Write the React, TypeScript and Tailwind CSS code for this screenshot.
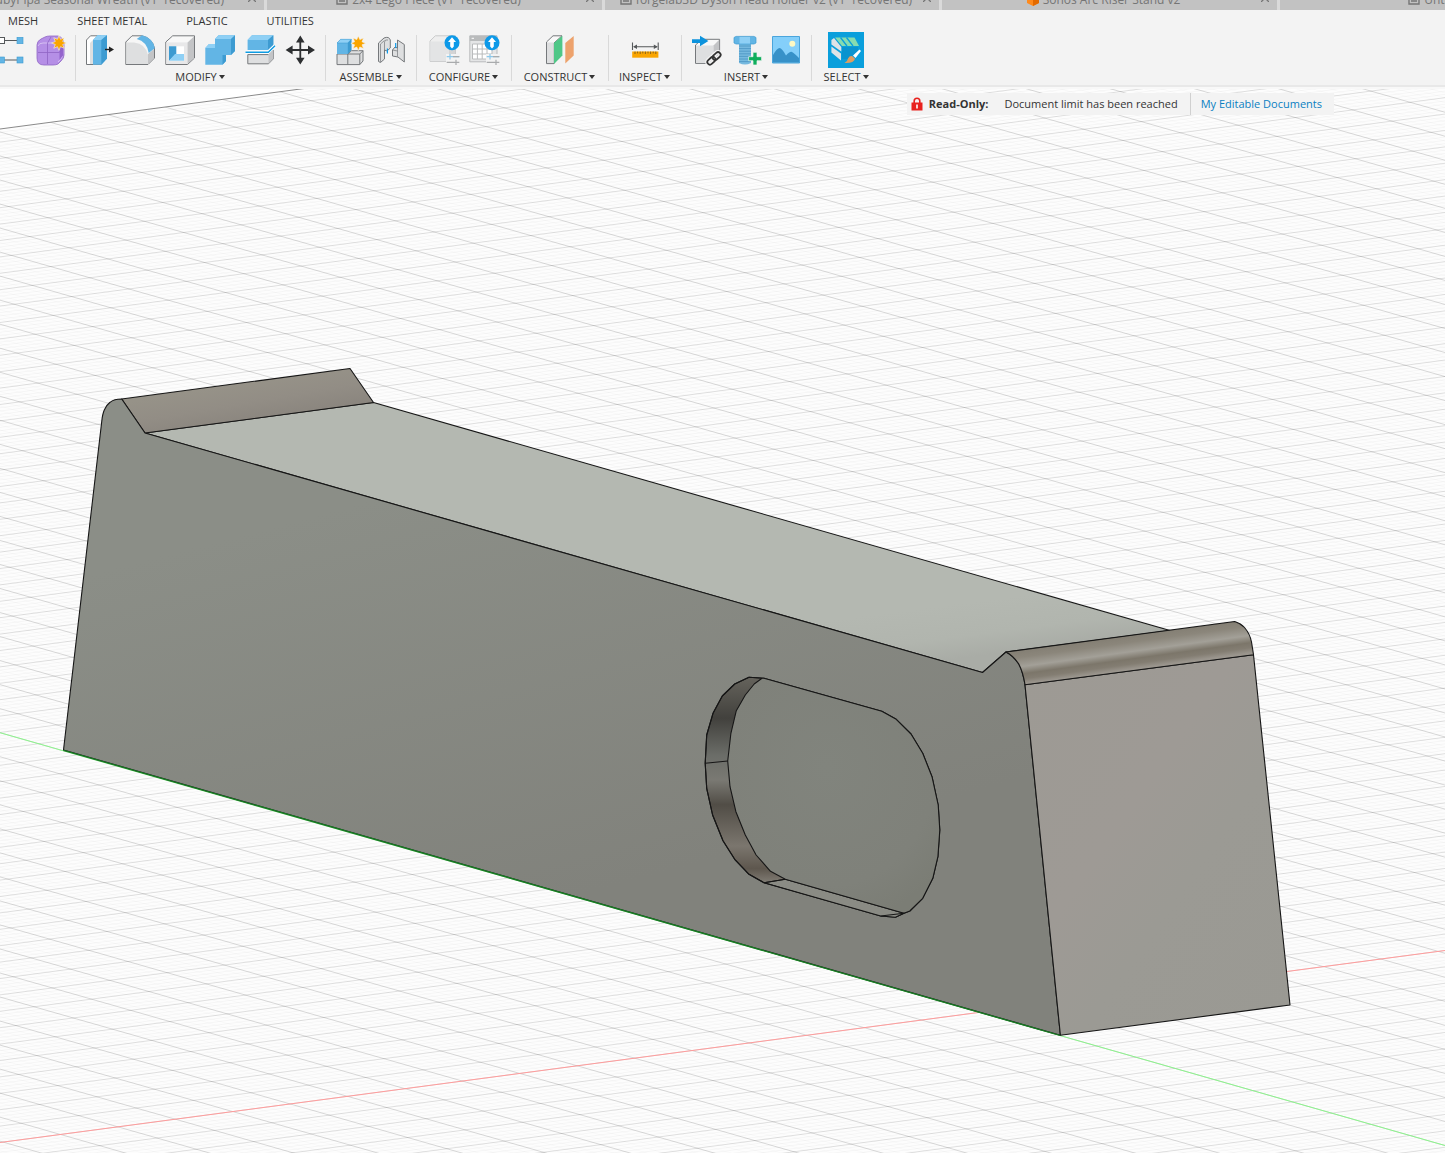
import type { ReactNode } from "react"

const BLUE = "#62b5e5"
const BLUE_DARK = "#3d9bd1"
const EDGE = "#75787b"
const FACE = "#dedfe0"
const SIDE = "#c3c4c6"

function Icon({ children }: { children: ReactNode }) {
  return (
    <svg viewBox="0 0 32 32" className="block h-8 w-8" aria-hidden="true">
      {children}
    </svg>
  )
}

function Star({ x, y }: { x: number; y: number }) {
  const points = Array.from({ length: 16 }, (_, i) => {
    const r = i % 2 ? 4 : 7.4
    const a = (i * Math.PI) / 8
    return `${(x + r * Math.sin(a)).toFixed(2)},${(y - r * Math.cos(a)).toFixed(2)}`
  }).join(" ")
  return <polygon points={points} fill="#faa500" stroke="#f3f3f3" strokeWidth="0.6" />
}

function UploadBadge() {
  return (
    <>
      <circle cx="24" cy="8.7" r="7.5" fill="#0d99e8" />
      <path d="M24 3.2 28 8H25.8V12.6L24 14.4 22.2 12.6V8H20Z" fill="#fff" />
    </>
  )
}

function Sliders() {
  return (
    <>
      <path d="M18 20H32V32H18Z" fill="#f3f3f3" />
      <path d="M18.7 22.7H31.3M22 20V25.4" stroke="#8cc8ea" strokeWidth="1.2" />
      <path d="M25 22.7H31.3M18.7 28.4H31.3M28 25.8V31" stroke="#a9abad" strokeWidth="1.2" />
    </>
  )
}

const icons: Record<string, ReactNode> = {
  pattern: (
    <Icon>
      <path d="M9 6.5H22M9 26H22" stroke="#55585a" strokeWidth="1" />
      <rect x="3.5" y="3.5" width="6" height="6" fill="#fff" stroke="#55585a" />
      <g fill={BLUE} stroke={BLUE_DARK} strokeWidth="0.6">
        <rect x="22" y="3.3" width="6" height="6.4" />
        <rect x="3.5" y="23" width="6" height="6" />
        <rect x="22" y="23" width="6" height="6" />
      </g>
    </Icon>
  ),
  form: (
    <Icon>
      <path d="M2 11Q2 7 6 5L10 3Q12 2 15 2H23Q28 3 29 10V21Q29 24 26 27L23 30Q21 31 18 31H9Q2 31 2 24Z" fill="#b58fe6" stroke="#8f65c4" strokeWidth="0.8" />
      <path d="M3 12Q4 9 8 9H19Q23 9 24 13L28 9V20Q27 25 23 28" fill="none" stroke="#d6c0f2" />
      <path d="M24.5 13V26L28.4 21V10Z" fill="#9464cd" />
      <path d="M12.5 9V30M3 18.5H24L28 15M12.5 9 16 3" fill="none" stroke="#8f65c4" strokeWidth="0.8" />
      <Star x={24} y={9} />
    </Icon>
  ),
  pressPull: (
    <Icon>
      <path d="M2.5 6 6.5 1.8H17V30.5H2.5Z" fill="#fff" stroke={EDGE} />
      <path d="M6 9 9 6V30H6Z" fill={FACE} />
      <path d="M9 6 13.5 1.3H23V24.5L17.3 30.7H9Z" fill={BLUE} />
      <path d="M9 6 13.5 1.3H23L17.3 6Z" fill="#8fd0f5" />
      <path d="M17.3 6 23 1.3V24.5L17.3 30.7Z" fill={BLUE_DARK} />
      <path d="M21 15.5H27" stroke="#222" strokeWidth="1.4" />
      <path d="M25 12.6 30 15.5 25 18.4Z" fill="#222" />
    </Icon>
  ),
  fillet: (
    <Icon>
      <path d="M1.8 8 8 1.8H18Q28 4 30.5 14V24L24 30.5H1.8Z" fill="#f6f6f6" stroke={EDGE} />
      <path d="M2.5 8.5H10Q22 10 24 21V30H2.5Z" fill={FACE} />
      <path d="M24 20 30 15V24L24 30Z" fill={SIDE} />
      <path d="M12.7 5 18 1.3Q29 4 30.8 14.3L24.7 19Q23 7.5 12.7 5Z" fill={BLUE} />
    </Icon>
  ),
  shell: (
    <Icon>
      <path d="M1.8 8 8.7 1.8H30.5V24L23.5 30.5H1.8Z" fill="#f8f8f8" stroke={EDGE} />
      <path d="M2.4 8.4H23.5V30H2.4Z" fill="#e8e8e9" />
      <path d="M23.5 8.4 30 2.4V24L23.5 30Z" fill={SIDE} />
      <path d="M5 12.3H20V26.7H5Z" fill="#fff" />
      <path d="M5 12.3H12.3V20L5 26.7Z" fill={BLUE_DARK} />
      <path d="M5 26.7 11 20H20V26.7Z" fill="#8fd0f5" />
    </Icon>
  ),
  combine: (
    <Icon>
      <path d="M1.3 14 5 10H11V5L14.5 1.3H31V17L27 21H22V27L18.5 30.7H1.3Z" fill={BLUE} />
      <path d="M11 5 14.5 1.3H31L27 5ZM1.3 14 5 10H11V14Z" fill="#8fd0f5" />
      <path d="M27 5 31 1.3V17L27 21ZM22 21V27L18.5 30.7V21Z" fill={BLUE_DARK} />
    </Icon>
  ),
  split: (
    <Icon>
      <path d="M3.6 6 8 1.3H29.3V11L24 16H3.6Z" fill={BLUE} />
      <path d="M3.6 6 8 1.3H29.3L24 6Z" fill="#8fd0f5" />
      <path d="M24 6 29.3 1.3V11L24 16Z" fill={BLUE_DARK} />
      <path d="M3.8 20.6H24.5L29.2 16V25L24.5 29.8H3.8Z" fill={FACE} stroke={EDGE} />
      <path d="M24.5 20.6 29 16V25L24.5 29.5Z" fill={SIDE} />
      <path d="M1.5 18.3H24.3L31 11.7" fill="none" stroke="#fff" strokeWidth="3.4" />
      <path d="M1.5 18.3H24.3L31 11.7" fill="none" stroke="#0d9be2" strokeWidth="1.4" />
    </Icon>
  ),
  move: (
    <Icon>
      <path d="M16.3 6V26M6 16H27" stroke="#2d2f31" strokeWidth="1.8" />
      <path d="M16.3 1.6 20.6 8.4H12ZM16.3 30.6 20.6 23.8H12ZM1.6 16 8.6 11.6V20.4ZM31 16 24 11.6V20.4Z" fill="#2d2f31" />
    </Icon>
  ),
  newComponent: (
    <Icon>
      <path d="M2 20H13L16.5 16.7H28V27L24.8 30.6H2Z" fill={FACE} stroke={EDGE} />
      <path d="M12.8 30.5V20H24.8V30.5M24.8 20 28 16.7" fill="none" stroke={EDGE} />
      <path d="M2 9 5.6 5.3H16.4V16L12.8 20H2Z" fill={BLUE} />
      <path d="M2 9 5.6 5.3H16.4L12.8 9Z" fill="#8fd0f5" stroke={BLUE_DARK} strokeWidth="0.5" />
      <path d="M12.8 9 16.4 5.3V16L12.8 20Z" fill={BLUE_DARK} />
      <Star x={23.3} y={9.3} />
    </Icon>
  ),
  joint: (
    <Icon>
      <path d="M3.5 9 9 4Q14 2 15.3 6V14L12 17 9.5 16V25L5.5 28.5 3.5 27.5Z" fill={FACE} stroke={EDGE} />
      <path d="M9.5 16V8Q10 5 13 6M5.5 28V10L9.5 6.5" fill="none" stroke={EDGE} strokeWidth="0.7" />
      <path d="M17.5 16 20 13 22.5 14V6L29.3 10.5V28L23 23 17.5 22Z" fill={FACE} stroke={EDGE} />
      <path d="M22.5 14V22.5M17.5 16 22.5 17" fill="none" stroke={EDGE} strokeWidth="0.7" />
      <path d="M12.4 14.5V19.5M20.7 9V14" stroke="#0d99e8" strokeWidth="1.2" />
    </Icon>
  ),
  configureModel: (
    <Icon>
      <path d="M2 7 7.3 1.8H27.5V24L22.5 27.4H2Z" fill="#eee" stroke="#c9cacb" />
      <path d="M2.5 7.5H21V27H2.5Z" fill="#e3e4e5" />
      <path d="M21 7.5 27 2V24L21 27Z" fill="#d3d4d5" />
      <Sliders />
      <UploadBadge />
    </Icon>
  ),
  configureTable: (
    <Icon>
      <path d="M1.8 1.8H29V27.8H1.8Z" fill="#e4e5e6" stroke="#b9bbbc" />
      <path d="M1.8 1.8H29V7H1.8Z" fill="#b9bbbc" />
      <path d="M3.6 4.3H6" stroke="#fff" />
      <path d="M4.5 10H24V25H4.5ZM9.4 10V25M14.2 10V25M19 10V25M4.5 15H24M4.5 20H24" fill="#fff" stroke="#b9bbbc" />
      <Sliders />
      <UploadBadge />
    </Icon>
  ),
  plane: (
    <Icon>
      <path d="M2.5 8 9 1.8H18L10 9V29.6H2.5Z" fill="#f8f8f8" stroke={EDGE} />
      <path d="M3 8.5H9.5V29H3Z" fill={FACE} />
      <path d="M10 9 18.4 1.8V21.5L10 30Z" fill="#4fc787" />
      <path d="M21.3 9 29.7 2V21.5L21.3 29.5Z" fill="#eda26c" />
    </Icon>
  ),
  measure: (
    <Icon>
      <path d="M3.5 8.5V16M29.2 8.5V16M5 12.7H28" stroke="#55585a" strokeWidth="1.1" />
      <path d="M4 12.7 8 10.4V15ZM28.8 12.7 24.8 10.4V15Z" fill="#55585a" />
      <path d="M3.2 17.5H29.4V23.7H3.2Z" fill="#faa500" />
      <path d="M6 17.5V20M8.6 17.5V19.4M11.2 17.5V20M13.8 17.5V19.4M16.4 17.5V20M19 17.5V19.4M21.6 17.5V20M24.2 17.5V19.4M26.8 17.5V20" stroke="#6b5220" strokeWidth="0.8" />
    </Icon>
  ),
  insertDerive: (
    <Icon>
      <path d="M5.5 11 12 5.3H29.6V23L23.5 29.4H5.5Z" fill="#f8f8f8" stroke={EDGE} />
      <path d="M6 11.5H23.5V29H6Z" fill={FACE} />
      <path d="M23.5 11.5 29.2 5.8V23L23.5 29Z" fill={SIDE} />
      <path d="M2 5.2H10V1.8L18.4 7 10 12.3V8.9H2Z" fill="#0d93dd" />
      <g fill="none" stroke="#f3f3f3" strokeWidth="4.4" transform="rotate(-42 24 24.4)">
        <rect x="16" y="21.8" width="9" height="5.2" rx="2.6" />
        <rect x="23" y="21.8" width="9" height="5.2" rx="2.6" />
      </g>
      <g fill="none" stroke="#333" strokeWidth="1.8" transform="rotate(-42 24 24.4)">
        <rect x="16" y="21.8" width="9" height="5.2" rx="2.6" />
        <rect x="23" y="21.8" width="9" height="5.2" rx="2.6" />
      </g>
    </Icon>
  ),
  fastener: (
    <Icon>
      <path d="M9 9.5H21V29Q15 32 9 29Z" fill="#76b9df" />
      <path d="M9 12H21M9 14.6H21M9 17.2H21M9 19.8H21M9 22.4H21M9 25H21M9 27.6H21" stroke="#4a94c2" strokeWidth="0.8" />
      <path d="M4 3.5 6 2.4H24L26 3.5V9L24 10H6L4 9Z" fill={BLUE} stroke={BLUE_DARK} strokeWidth="0.7" />
      <path d="M9.5 3V9.6H20V3Z" fill="#8fd0f5" />
      <path d="M23 18.3H27V22.7H31.6V26.7H27V31H23V26.7H18.6V22.7H23Z" fill="#0fae5c" stroke="#f3f3f3" strokeWidth="0.7" />
    </Icon>
  ),
  canvas: (
    <Icon>
      <path d="M2.5 2.5H29.5V29H2.5Z" fill="#84cffa" stroke="#4aa5dc" />
      <circle cx="22.3" cy="9.8" r="3" fill="#fdf9c4" />
      <path d="M3 21Q7 14 9.5 14T16 21.5Q20 17 22 18T29 24V28.6H3Z" fill="#3791c8" />
    </Icon>
  ),
  select: (
    <svg viewBox="0 0 36 36" className="block h-9 w-9 bg-[#0a9fdc]" aria-hidden="true">
      <path d="M7 5.5H26.5L31 14H14Z" fill="#86dcb0" />
      <path d="M12.5 5.5 19 14M18.5 5.5 25 14" stroke="#0a9fdc" strokeWidth="1.3" />
      <path d="M3.4 8 6 6 13.3 15V19.5L3.4 12.5ZM3.4 14.4 13 21.4V28.5L3.4 20.5Z" fill="#dfe3e6" />
      <path d="M14 15H30V19L20 27H14Z" fill="#0a93cf" />
      <path d="M31.5 17.5 33 19 27.5 26 25 23.6Z" fill="#fff" />
      <path d="M24.4 24.2 27 26.8Q26 31.5 16.5 31 19.5 29.5 20 26.5 21.5 23.6 24.4 24.2Z" fill="#dc9e62" />
    </svg>
  ),
}

type Tool = { icon: string; label: string }

const groups: { name: string; width: string; tools: Tool[] }[] = [
  {
    name: "MODIFY",
    width: "w-[250px]",
    tools: [
      { icon: "pressPull", label: "Press Pull" },
      { icon: "fillet", label: "Fillet" },
      { icon: "shell", label: "Shell" },
      { icon: "combine", label: "Combine" },
      { icon: "split", label: "Split Body" },
      { icon: "move", label: "Move/Copy" },
    ],
  },
  {
    name: "ASSEMBLE",
    width: "w-[91px]",
    tools: [
      { icon: "newComponent", label: "New Component" },
      { icon: "joint", label: "Joint" },
    ],
  },
  {
    name: "CONFIGURE",
    width: "w-[95px]",
    tools: [
      { icon: "configureModel", label: "Configure Model" },
      { icon: "configureTable", label: "Configuration Table" },
    ],
  },
  { name: "CONSTRUCT", width: "w-[97px]", tools: [{ icon: "plane", label: "Offset Plane" }] },
  { name: "INSPECT", width: "w-[73px]", tools: [{ icon: "measure", label: "Measure" }] },
  {
    name: "INSERT",
    width: "w-[130px]",
    tools: [
      { icon: "insertDerive", label: "Insert Derive" },
      { icon: "fastener", label: "Insert Fastener" },
      { icon: "canvas", label: "Canvas" },
    ],
  },
  { name: "SELECT", width: "w-[70px]", tools: [{ icon: "select", label: "Select" }] },
]

function ToolButton({ icon, label }: Tool) {
  return (
    <button type="button" aria-label={label} className="flex h-9 w-10 shrink-0 items-center justify-center">
      {icons[icon]}
    </button>
  )
}

const documents = [
  { title: "edbyPipa Seasonal Wreath (v1~recovered)", kind: "none", width: "w-[264px] justify-end" },
  { title: "2x4 Lego Piece (v1~recovered)", kind: "doc", width: "w-[335px] justify-center pr-3" },
  { title: "forgelab3D Dyson Head Holder v2 (v1~recovered)", kind: "doc", width: "w-[334px] justify-center pr-3" },
  { title: "Sonos Arc Riser Stand v2", kind: "part", width: "w-[335px] justify-center pr-3" },
  { title: "Untitled", kind: "doc", width: "flex-1 justify-end" },
]

function DocumentTabs() {
  return (
    <div className="flex h-2.5 gap-[3px] overflow-hidden bg-[#dadada] text-xs text-[#757575]">
      {documents.map((doc, i) => (
        <div key={doc.title} className={`relative flex shrink-0 items-end bg-[#c2c2c2] pb-0.5 ${doc.width}`}>
          <button
            type="button"
            className={`flex shrink-0 items-center gap-1 whitespace-nowrap leading-4 ${i === 0 ? "mr-10" : ""} ${i === 4 ? "-mr-6" : ""}`}
          >
            {doc.kind === "doc" && (
              <svg viewBox="0 0 12 14" className="h-3.5 w-3" aria-hidden="true">
                <path d="M1 1H11V11H1ZM3 5H9M3 8H9" fill="none" stroke="#757575" strokeWidth="1.4" />
              </svg>
            )}
            {doc.kind === "part" && (
              <svg viewBox="0 0 12 14" className="h-3.5 w-3" aria-hidden="true">
                <path d="M0 3 6 0 12 3V10L6 13 0 10Z" fill="#ff8a1c" />
                <path d="M6 6 12 3V10L6 13Z" fill="#e36a00" />
              </svg>
            )}
            {doc.title}
          </button>
          {i < 4 && (
            <button type="button" aria-label={`Close ${doc.title}`} className="absolute right-2 bottom-2">
              <svg viewBox="0 0 8 8" className="h-2 w-2" aria-hidden="true">
                <path d="M0 0 8 8M8 0 0 8" stroke="#757575" strokeWidth="1.3" />
              </svg>
            </button>
          )}
        </div>
      ))}
    </div>
  )
}

function Toolbar() {
  return (
    <header className="border-b-2 border-[#e8e8e8] bg-[#f3f3f3] text-[#333]">
      <nav className="flex h-[22px] items-center gap-[39px] pl-2 text-[11px] leading-4">
        <button type="button">MESH</button>
        <button type="button">SHEET METAL</button>
        <button type="button">PLASTIC</button>
        <button type="button">UTILITIES</button>
      </nav>
      <div className="flex h-[53px] overflow-hidden text-[11px] leading-4">
        <div className="flex w-[75px] shrink-0 justify-end pr-1">
          <ToolButton icon="pattern" label="Pattern" />
          <ToolButton icon="form" label="Create Form" />
        </div>
        {groups.map((group) => (
          <div key={group.name} className={`flex shrink-0 flex-col items-center ${group.width} relative`}>
            <span className="absolute top-[3px] bottom-1 left-0 w-px bg-[#d9d9d9]" />
            <div className="flex">
              {group.tools.map((tool) => (
                <ToolButton key={tool.icon} {...tool} />
              ))}
            </div>
            <button type="button" className="mt-px flex items-center gap-0.5 whitespace-nowrap">
              {group.name}
              <svg viewBox="0 0 6 4" className="h-1 w-1.5" aria-hidden="true">
                <path d="M0 0H6L3 4Z" fill="#333" />
              </svg>
            </button>
          </div>
        ))}
      </div>
    </header>
  )
}

// Ground grid. Both line families are given by where they cross x = 0.
const WIDTH = 1445
const RED_SLOPE = -0.1329
const GREEN_SLOPE = 0.2857

function gridPath(start: number, step: number, slope: number, from: number, to: number, minor: boolean) {
  let d = ""
  for (let i = from; i < to; i++) {
    if (minor === (i % 5 === 0)) continue
    const y = start + (i * step) / 5
    d += `M0 ${y.toFixed(2)}L${WIDTH} ${(y + slope * WIDTH).toFixed(2)}`
  }
  return d
}

const minorRed = gridPath(1142.5, 16.4, RED_SLOPE, -308, 70, true)
const minorGreen = gridPath(732.7, 24.03, GREEN_SLOPE, -220, 90, true)
const majorRed = gridPath(1142.5, 16.4, RED_SLOPE, -308, 70, false)
const majorGreen = gridPath(732.7, 24.03, GREEN_SLOPE, -220, 90, false)

const OUTER =
  "M764 678.3 881.8 711.3 896.2 719.3 911 734 922.7 753.3 932 776.7 938.2 805 939.8 830 937.9 856.7 932.8 878.3 922.7 898.3 909.8 911 904 913.3 895.4 917.3 880.7 916 764 882.7 749 874.3 734.7 859.3 723 840.7 712.6 815 706.7 788.3 705.2 763.3 706.7 735 713 713.3 722.3 696 734.7 684 749 677.3Z"
const INNER =
  "M762 678.3 754.2 684 745.3 695 736.3 710.7 730.9 733.3 727.7 761 730 786.7 735.9 811.7 745.3 835 756.1 855 770.5 871.3 785.3 879.3 904 913.3"

function Viewport() {
  return (
    <svg viewBox="0 89 1445 1064" className="block h-auto w-full" role="img" aria-label="Riser stand model">
      <defs>
        <clipPath id="ground">
          <path d="M0 129 338 84H1445V1153H0Z" />
        </clipPath>
        <clipPath id="pocket">
          <path d={OUTER} />
        </clipPath>
        <linearGradient id="front" gradientUnits="userSpaceOnUse" x1="450" y1="480" x2="560" y2="900">
          <stop offset="0" stopColor="#8b8e87" />
          <stop offset="1" stopColor="#81827c" />
        </linearGradient>
        <linearGradient id="top" gradientUnits="userSpaceOnUse" x1="1080" y1="588" x2="1087" y2="642">
          <stop offset="0" stopColor="#b4b8b1" />
          <stop offset="0.6" stopColor="#b1b5ae" />
          <stop offset="1" stopColor="#a9aca6" />
        </linearGradient>
        <linearGradient id="side" x1="0" y1="0" x2="1" y2="1">
          <stop offset="0" stopColor="#9d9a94" />
          <stop offset="0.4" stopColor="#9e9a95" />
          <stop offset="0.6" stopColor="#9b9a94" />
          <stop offset="1" stopColor="#9a9993" />
        </linearGradient>
        <linearGradient id="lip" gradientUnits="userSpaceOnUse" x1="235" y1="384" x2="242" y2="425">
          <stop offset="0" stopColor="#969288" />
          <stop offset="0.5" stopColor="#928d85" />
          <stop offset="1" stopColor="#8a857e" />
        </linearGradient>
        <linearGradient id="ridge" gradientUnits="userSpaceOnUse" x1="1120" y1="637" x2="1124.5" y2="670">
          <stop offset="0" stopColor="#847f74" />
          <stop offset="0.2" stopColor="#8b867b" />
          <stop offset="0.48" stopColor="#a3a098" />
          <stop offset="0.7" stopColor="#7c766a" />
          <stop offset="0.85" stopColor="#837d72" />
          <stop offset="1" stopColor="#9a958d" />
        </linearGradient>
        <linearGradient id="wall" gradientUnits="userSpaceOnUse" x1="0" y1="677" x2="0" y2="883">
          <stop offset="0" stopColor="#65635c" />
          <stop offset="0.2" stopColor="#42413d" />
          <stop offset="0.38" stopColor="#6b6d68" />
          <stop offset="0.5" stopColor="#7a7973" />
          <stop offset="0.62" stopColor="#514d46" />
          <stop offset="0.82" stopColor="#7b766e" />
          <stop offset="0.93" stopColor="#5e574e" />
          <stop offset="1" stopColor="#817d75" />
        </linearGradient>
        <radialGradient id="floor" cx="0.45" cy="0.4" r="0.65">
          <stop offset="0" stopColor="#81847d" />
          <stop offset="0.75" stopColor="#7f817a" />
          <stop offset="1" stopColor="#7b7d75" />
        </radialGradient>
      </defs>

      <path d="M0 87H1445V1153H0Z" fill="#fff" />
      <g clipPath="url(#ground)" fill="none">
        <path d="M0 87H1445V1153H0Z" fill="#fdfdfd" />
        <path d={minorRed} stroke="#000" strokeOpacity="0.03" />
        <path d={minorGreen} stroke="#000" strokeOpacity="0.02" />
        <path d={majorRed} stroke="#000" strokeOpacity="0.12" />
        <path d={majorGreen} stroke="#000" strokeOpacity="0.15" />
      </g>
      <path d="M0 129 338 84" stroke="#8a8a8a" />
      <path d="M0 1142.5 1445 950.5" stroke="#ff9c9c" />
      <path d="M0 732.7 1445 1145.5" stroke="#8cf58c" />

      <g stroke="#161616" strokeWidth="1.1" strokeLinejoin="round">
        <path d="M145 433 373.5 402.5 1170 630.5 1006 652 982.5 672.5Z" fill="url(#top)" />
        <path d="M121.7 399 350 368.5 373.5 402.5 145 433Z" fill="url(#lip)" />
        <path
          d="M63.5 750 101.7 421.7Q102.5 414 104.3 410 106.5 405 110 402.3 114 399 121.7 399L145 433 982.5 672.5 1006 652Q1013 655.5 1018.8 664 1023 672 1025 684.7L1060.4 1035.3Z"
          fill="url(#front)"
        />
        <path d="M1025 684.7 1253.5 654.7 1290 1005 1060.4 1035.3Z" fill="url(#side)" />
        <path
          d="M1006 652 1234.7 621.5Q1241 623.5 1244.5 627.5 1250 634 1251.5 642L1253.5 654.7 1025 684.7Q1023 672 1018.8 664 1013 655.5 1006 652Z"
          fill="url(#ridge)"
        />
        <path d={OUTER} fill="url(#wall)" />
        <g clipPath="url(#pocket)">
          <path d="M764 882.7 785.3 879.3 904 913.3 895 919 880 917Z" fill="#8a8b84" />
          <path d={INNER + "L950 913V670H764Z"} fill="url(#floor)" />
        </g>
        <path d={OUTER} fill="none" />
        <path d="M705.2 763.3 727.7 761M764 882.7 785.3 879.3M880.7 916 904 913.3" fill="none" />
      </g>
      <path d="M63.5 750.3 1060.4 1035.5" stroke="#187a24" strokeWidth="1.3" />
    </svg>
  )
}

function ReadOnlyBar() {
  return (
    <div className="absolute top-1 right-[111px] flex h-[22px] items-center bg-[#f3f3f3] pr-3 pl-1 text-[11px] leading-4 text-[#333]">
      <svg viewBox="0 0 12 14" className="h-3.5 w-3" aria-hidden="true">
        <path d="M3.2 6V4Q3.2 1.3 6 1.3T8.8 4V6" fill="none" stroke="#e8211d" strokeWidth="1.6" />
        <path d="M0.5 5.5H11.5V13.5H0.5Z" fill="#e8211d" />
        <path d="M6 7.5V11.5" stroke="#fff" strokeWidth="1.6" />
      </svg>
      <strong className="ml-1.5 font-bold">Read-Only:</strong>
      <span className="ml-4 border-r border-[#d0d0d0] pr-3 leading-[22px]">Document limit has been reached</span>
      <a href="#documents" className="ml-2.5 text-[#0a7fc2]">
        My Editable Documents
      </a>
    </div>
  )
}

export default function App() {
  return (
    <div className="flex min-h-screen flex-col overflow-hidden bg-white font-['Open_Sans',sans-serif]">
      <DocumentTabs />
      <Toolbar />
      <main className="relative border-t-2 border-[#f8f8f8]">
        <Viewport />
        <ReadOnlyBar />
      </main>
    </div>
  )
}
